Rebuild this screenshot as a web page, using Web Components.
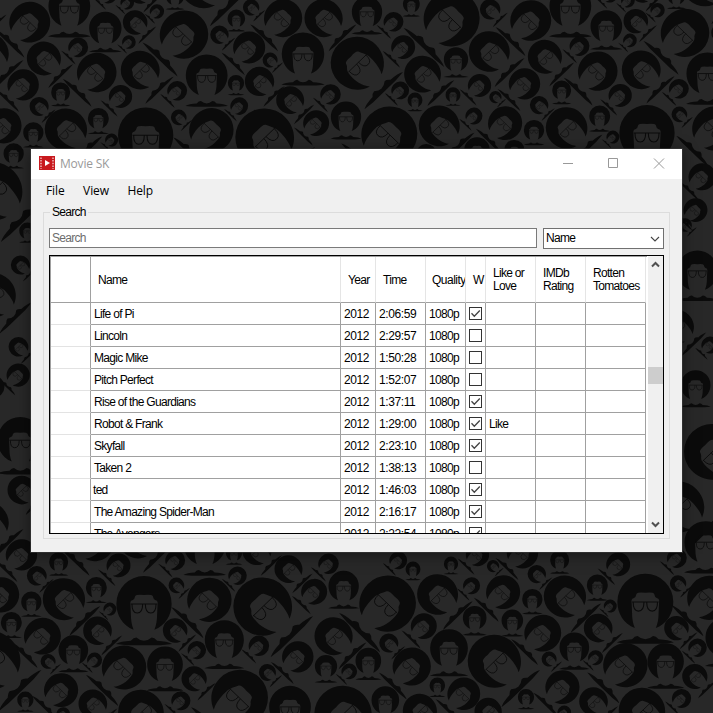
<!DOCTYPE html>
<html lang="en"><head><meta charset="utf-8"><title>Movie SK</title>
<style>html,body{margin:0;width:713px;height:713px;overflow:hidden;background:#282828}</style></head>
<body><sk-desktop><sk-window></sk-window></sk-desktop>
<script>
const define=(name,render)=>customElements.define(name,class extends HTMLElement{
  connectedCallback(){ if(!this.shadowRoot){ this.attachShadow({mode:'open'}).innerHTML=render(this); } }
});

/* Wallpaper heads: x, y, radius, tilt. F upright, L chin to the lower left, R chin to the lower right. */
const heads=[
[0,0,`90,66,60,L 208,18,62,F 316,84,48,F 405,67,36,R 382,8,20,L 471,34,21,L 525,-12,27,F 553,103,71,L 610,-48,71,R 387,126,20,L 235,142,29,L 131,175,50,R 291,217,58,L 420,210,57,R 70,254,46,L 182,276,28,F 362,289,34,L 117,319,28,R 532,272,29,L 620,226,62,F 536,352,23,R 708,249,24,F 778,244,43,R 709,55,26,F 753,22,24,R 658,104,27,R 748,142,47,L 810,180,22,R 850,54,56,L 909,161,63,F 970,54,56,R 870,300,41,R 992,283,30,L 718,318,26,L 295,355,31,F 197,388,62,R 100,397,30,F 335,420,19,L 437,405,82,F 635,390,65,L 793,412,86,R 949,369,38,L 1038,350,45,F 12,377,52,L -36,160,60,R 41,460,30,F -34,34,30,R 325,-15,25,L 420,-25,35,R`],
[1059,0,`42,35,45,F 122,65,29,L 175,12,25,F 297,55,82,L 151,141,35,L 208,222,54,R 12,189,78,R 309,178,36,F 408,154,60,R 411,28,30,R 534,61,60,L 652,18,62,F 760,78,47,F 848,63,36,R 575,170,50,R 680,138,29,L 735,213,58,L 864,209,57,R 831,121,20,L 914,30,21,L 825,2,20,L 997,98,71,L 970,-14,27,F 1063,220,62,F 380,256,34,L 427,291,18,R 515,251,46,L 300,284,22,F 186,300,22,F 142,271,26,L 558,315,27,R 626,270,28,F 802,286,34,L 978,266,29,L 979,343,23,R 882,398,82,F 740,348,31,F 640,383,61,R 543,390,30,F 457,369,50,L 363,348,25,L 258,377,60,R 110,402,82,L 372,450,38,F 220,462,30,L 484,450,30,F 780,411,19,L 1085,385,65,L 1055,-54,71,R 868,-28,35,R 770,-18,25,L 1102,98,27,R`],
[0,1650,`65,14,46,L 176,35,28,F 110,77,29,R 356,46,35,L 285,-26,58,L 5,134,52,L 191,147,62,R 94,155,30,F 289,112,31,F 330,177,19,L 432,161,82,F 529,106,23,R 526,31,29,L 413,-33,57,R 614,-17,62,F 702,8,24,F 770,1,43,R 713,77,27,L 629,149,65,L 787,169,86,R 865,57,41,R 986,41,30,L 943,125,38,L 1031,108,45,F 34,217,31,F 128,258,54,L 292,242,42,R 220,300,44,F -28,330,86,R 144,334,22,R 284,330,22,L 373,352,65,L 495,343,53,F 525,241,36,R 591,300,27,L 673,269,58,F 777,287,30,L 582,386,37,R 802,367,25,R 894,320,46,L 1000,258,56,R 978,348,33,F 1048,364,23,L 720,443,83,L 870,470,62,F 1028,492,84,R 422,487,67,R 543,452,28,L 278,461,42,R 184,420,50,L 76,449,24,F 190,492,20,L`],
[1059,1650,`136,31,26,L 180,57,22,F 294,41,21,F 374,14,34,L 420,48,18,R 509,8,46,L 551,72,27,R 620,29,28,F 796,43,35,L 972,24,29,L 975,100,24,R 733,105,31,F 772,168,19,L 877,155,83,F 1070,143,65,L 105,160,83,L 253,133,60,R 356,107,25,L 451,126,50,L 538,147,30,F 635,139,62,R 365,203,35,F 478,211,32,F 213,228,38,L 107,279,28,R 570,249,54,L 735,234,42,R 970,234,36,R 664,292,44,F 588,327,22,R 728,323,22,L 818,345,65,L 938,334,54,F 1034,293,27,L 1116,262,58,F 1025,379,37,R 288,294,56,F 423,333,78,R 177,349,56,L 46,332,38,F 253,406,23,F 333,431,48,L 97,450,41,F 200,482,50,R 405,484,40,R 519,441,24,F 629,411,50,L 721,454,42,R 866,482,68,R 986,445,28,L 634,487,20,L`],
[0,0,`-22,573,86,R 82,692,24,F 61,795,28,R -20,885,65,R 55,1040,29,R 55,1125,34,L -20,1160,33,L 61,1320,68,F 65,1470,42,R -36,1567,60,R 2107,530,40,L 2087,630,35,L 2055,675,20,R 2092,812,60,F 2030,980,50,R 2130,1035,25,L 2087,1155,44,F 2135,1355,82,R 2035,1520,75,R 2116,1626,62,F`]];
const turn={F:'',L:'rotate(44)',R:'scale(-1 1) rotate(44)'};
define('sk-desktop',()=>`<style>
:host{display:grid;width:713px;height:713px;overflow:hidden;background:#282828}
svg,.front{grid-area:1/1}
.front{padding:149px 0 0 31px;z-index:1}
</style>
<svg width="713" height="713" viewBox="0 0 2139 2139"><defs>
<path id="body" fill="#0b0b0b" d="M-103 148Q-85 138-48 136Q-38 124-28 124Q-14 136 0 136Q14 136 28 124Q38 124 48 136Q85 138 103 148L60 152H-60Z"/>
<g id="upright"><use href="#body"/>
<path fill="#0b0b0b" d="M-38 95C-78 80-101 42-101 0A101 101 0 0 1 101 0C101 42 78 80 38 95C45 80 48 60 48 40L50-5Q49-12 41-13Q35-15 32-28Q28-35 0-32Q-28-35-32-28Q-35-15-41-13Q-49-12-50-5L-48 40C-48 60-45 80-38 95Z"/>
<path fill="none" stroke="#0b0b0b" stroke-width="4" d="M-48 1H48M-44 2Q-44 34-25 34Q-5 34-5 2M5 2Q5 34 25 34Q44 34 44 2"/></g>
<g id="tilted"><use href="#body"/>
<path fill="#0b0b0b" d="M-38 97C-80 80-101 42-101 0A101 101 0 0 1 101 0C101 46 72 88 27 99C46 76 56 42 50 2Q49-6 41-13Q35-17 32-28Q28-37 0-34Q-28-37-34-28Q-40-15-44-8Q-54 12-52 34C-51 60-47 82-38 97Z"/>
<path fill="none" stroke="#0b0b0b" stroke-width="3.2" d="M-50 2H48M-46 2Q-48 34-27 34Q-6 34-6 2M4 2Q4 34 24 34Q44 34 44 2"/></g></defs>
${heads.map(([ox,oy,list])=>list.split(' ').map(h=>{const [x,y,r,t]=h.split(',');return `<use href="#${t=='F'?'upright':'tilted'}" transform="translate(${+x+ox} ${+y+oy}) ${turn[t]} scale(${r/100})"/>`}).join('')).join('')}
</svg><div class="front"><slot></slot></div>`);

define('sk-titlebar',()=>`<style>
:host{display:flex;height:30px;background:#fff;align-items:center;padding-left:8px;color:#999;font:12px/16px "Open Sans","Noto Sans",sans-serif}
.t{margin:0 auto 0 5px;letter-spacing:-.2px}
.c{display:block}
</style>
<svg width="16" height="14" viewBox="0 0 16 14" style="margin-top:-2px"><path fill="#c8191e" d="M0 0h16v14H0z"/><path fill="#fff" d="M6 4l5 3-5 3z"/><path stroke="#f3c3c4" stroke-width="1.4" stroke-dasharray="1.5 1.2" d="M2 1.4V13M14 1.4V13"/></svg>
<span class="t">Movie SK</span>
<svg class="c" width="138" height="30" fill="none" stroke="#999"><path d="M19 14.5h10M64.500 9.500h9v9h-9zM110 9.500l10 10M120 9.500l-10 10"/></svg>`);

define('sk-menubar',()=>`<style>
:host{display:flex;box-sizing:border-box;gap:18.500px;padding:3px 15px 0;height:20px;color:#000;font:12px/18px "Open Sans","Noto Sans",sans-serif}
</style><span>File</span><span>View</span><span>Help</span>`);

define('sk-textbox',()=>`<style>
:host{display:block;box-sizing:border-box;width:488px;height:20px;border:1px solid #7a7a7a;background:#fff;color:#6d6d6d;padding-left:2px;line-height:18px}
</style><slot></slot>`);

define('sk-combo',()=>`<style>
:host{display:flex;box-sizing:border-box;width:121px;height:21px;border:1px solid #707070;background:#fff;padding:0 2px;line-height:18px;align-items:center;justify-content:space-between}
</style><span style="margin-top:-1px"><slot></slot></span><svg width="12" height="8" fill="none" stroke="#444" stroke-width="1.1"><path d="M2 2l4 4L10 2"/></svg>`);

define('sk-check',el=>`<style>
:host{display:block;box-sizing:border-box;width:13px;height:13px;border:1px solid #333;background:#fff}svg{display:block}
</style>${el.hasAttribute('on')?'<svg width="11" height="11" fill="none" stroke="#444" stroke-width="1.300"><path d="M1.500 5.300L4.300 8.300L9.800 2.500"/></svg>':''}`);

define('sk-scrollbar',()=>`<style>
:host{display:flex;flex-direction:column;width:15px;background:#f0f0f0;margin-left:1px}
i{height:17px;margin-top:94px;background:#cdcdcd}
svg{display:block}
</style><svg width="15" height="17" fill="none" stroke="#505050" stroke-width="2"><path d="M4 10.500l3.500-3.500 3.500 3.500"/></svg><i></i>
<svg width="15" height="17" style="margin-top:auto" fill="none" stroke="#505050" stroke-width="2"><path d="M4 6.500L7.500 10L11 6.500"/></svg>`);

const movies=[['Life of Pi','2:06:59',1],['Lincoln','2:29:57',0],['Magic Mike','1:50:28',0],['Pitch Perfect','1:52:07',0],['Rise of the Guardians','1:37:11',1],['Robot &amp; Frank','1:29:00',1,'Like'],['Skyfall','2:23:10',1],['Taken 2','1:38:13',0],['ted','1:46:03',1],['The Amazing Spider-Man','2:16:17',1],['The Avengers','2:22:54',1]];
define('sk-grid',()=>`<style>
:host{display:flex;box-sizing:border-box;width:615px;height:279px;border:1px solid #000;background:#fff;overflow:hidden}
.g{width:596px;height:276px;border:solid #a0a0a0;border-width:1px 0 0 1px;overflow:hidden}
.r{display:grid;grid-template-columns:40px 250px 35px 50px 40px 20px 50px 50px 60px;height:22px}
.r>*{box-sizing:border-box;border:solid #a0a0a0;border-width:0 1px 1px 0;padding-left:3px;line-height:22px;overflow:hidden;white-space:nowrap}
.r>:first-child{border-bottom-color:#e3e3e3}
.h{height:46px}
.h>*{display:flex;align-items:center;padding:1px 0 0 7px;line-height:13px;border-right-color:#e5e5e5;white-space:pre}
.h>:first-child{border-right-color:#a0a0a0;border-bottom-color:#a0a0a0}
.q{letter-spacing:-.7px}
.h .q{padding-left:6px;letter-spacing:-.5px}
.y{letter-spacing:-.4px}
.k{padding:4px 0 0 3px!important}
</style><div class="g"><div class="r h"><span></span><span>Name</span><span>Year</span><span>Time</span><span class="q">Quality</span><span>W</span><span>Like or
Love</span><span>IMDb
Rating</span><span>Rotten
Tomatoes</span></div>
${movies.map(m=>`<div class="r"><span></span><span${m[0]=='ted'?' style="padding-left:2px"':''}>${m[0]}</span><span class="y">2012</span><span class="y">${m[1]}</span><span class="q">1080p</span><span class="k"><sk-check ${m[2]?'on':''}></sk-check></span><span>${m[3]||''}</span><span></span><span></span></div>`).join('')}
</div><sk-scrollbar></sk-scrollbar>`);

define('sk-group',()=>`<style>
:host{display:block;box-sizing:border-box;margin:13px 12px 0;height:327px;border:1px solid #dcdcdc;padding:0 5px}
.l{display:block;width:36px;height:15px;line-height:15px;margin:-8px 0 8px 1px;padding-left:2px;background:#f0f0f0;white-space:nowrap}
.s{display:flex;gap:6px;margin-bottom:6px}
</style><span class="l">Search</span><div class="s"><sk-textbox>Search</sk-textbox><sk-combo>Name</sk-combo></div><sk-grid></sk-grid>`);

define('sk-window',()=>`<style>
:host{display:block;width:651px;height:403px;background:#f0f0f0;box-shadow:0 0 0 1px rgba(60,60,60,.6),0 2px 14px rgba(0,0,0,.5);color:#000;font:12px/15px "Liberation Sans",Arial,sans-serif;letter-spacing:-.7px}
sk-titlebar,sk-menubar{letter-spacing:-.1px}
</style><sk-titlebar></sk-titlebar><sk-menubar></sk-menubar><sk-group></sk-group>`);
</script></body></html>
